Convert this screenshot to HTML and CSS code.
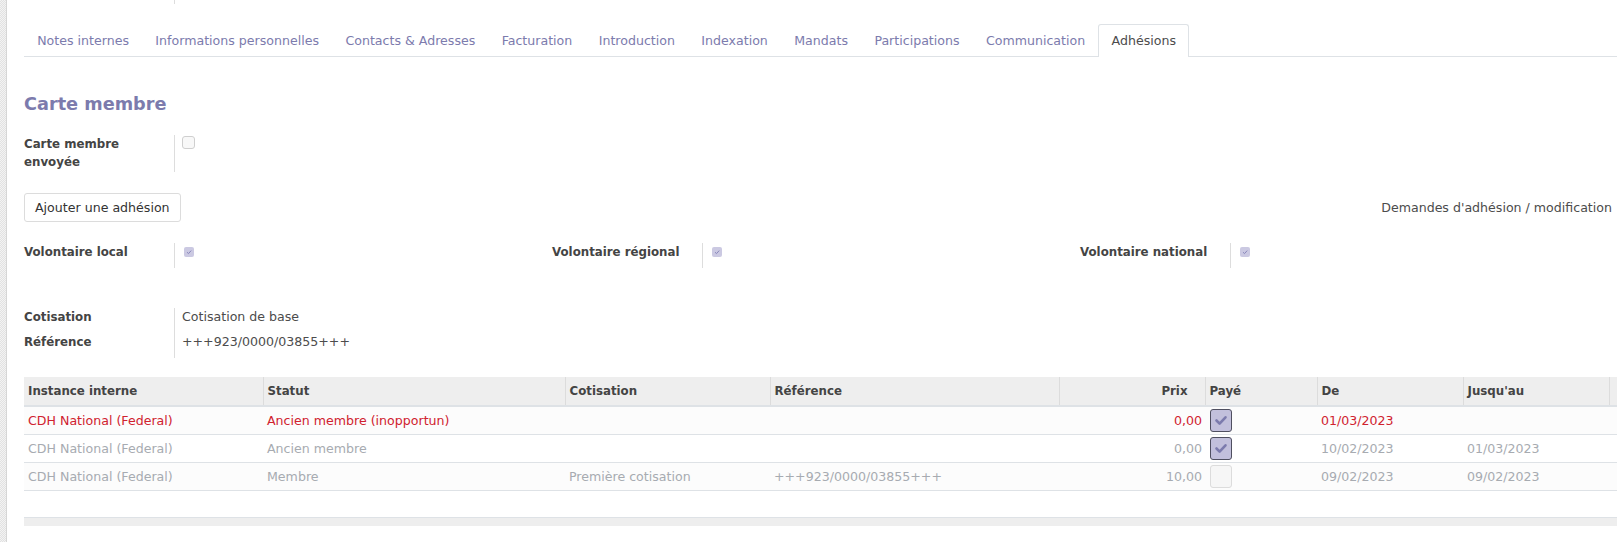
FILE: index.html
```html
<!DOCTYPE html>
<html lang="fr">
<head>
<meta charset="utf-8">
<title>Adhésions</title>
<link rel="stylesheet" href="styles.css">
</head>
<body>
<div class="app">
  <div class="strip"></div>
  <div class="main">
    <div class="top-frag"></div>
    <ul class="tabs">
      <li><a>Notes internes</a></li>
      <li><a>Informations personnelles</a></li>
      <li><a>Contacts &amp; Adresses</a></li>
      <li><a>Facturation</a></li>
      <li><a>Introduction</a></li>
      <li><a>Indexation</a></li>
      <li><a>Mandats</a></li>
      <li><a>Participations</a></li>
      <li><a>Communication</a></li>
      <li class="active"><a>Adhésions</a></li>
    </ul>
    <div class="sheet">
      <h2 class="title">Carte membre</h2>
      <div class="field field-card">
        <div class="label">Carte membre<br>envoyée</div>
        <div class="value"><span class="cb-md"></span></div>
      </div>
      <div class="actions">
        <button class="btn">Ajouter une adhésion</button>
        <span class="requests">Demandes d'adhésion / modification</span>
      </div>
      <div class="volunteers">
        <div class="field field-vol">
          <div class="label">Volontaire local</div>
          <div class="value"><span class="cb-sm"><svg viewBox="0 0 10 10" width="10" height="10"><polyline points="3,5.2 4.5,6.6 7.2,3.6" fill="none" stroke="#8a88bb" stroke-width="1"/></svg></span></div>
        </div>
        <div class="field field-vol">
          <div class="label">Volontaire régional</div>
          <div class="value"><span class="cb-sm"><svg viewBox="0 0 10 10" width="10" height="10"><polyline points="3,5.2 4.5,6.6 7.2,3.6" fill="none" stroke="#8a88bb" stroke-width="1"/></svg></span></div>
        </div>
        <div class="field field-vol">
          <div class="label">Volontaire national</div>
          <div class="value"><span class="cb-sm"><svg viewBox="0 0 10 10" width="10" height="10"><polyline points="3,5.2 4.5,6.6 7.2,3.6" fill="none" stroke="#8a88bb" stroke-width="1"/></svg></span></div>
        </div>
      </div>
      <div class="fields-cot">
        <div class="field field-line">
          <div class="label">Cotisation</div>
          <div class="value">Cotisation de base</div>
        </div>
        <div class="field field-line">
          <div class="label">Référence</div>
          <div class="value">+++923/0000/03855+++</div>
        </div>
      </div>
      <table class="list">
        <colgroup>
          <col style="width:239px"><col style="width:302px"><col style="width:205px"><col style="width:289px"><col style="width:146px"><col style="width:112px"><col style="width:146px"><col style="width:146px"><col style="width:30px">
        </colgroup>
        <thead>
          <tr>
            <th>Instance interne</th>
            <th>Statut</th>
            <th>Cotisation</th>
            <th>Référence</th>
            <th class="num">Prix</th>
            <th>Payé</th>
            <th>De</th>
            <th>Jusqu'au</th>
            <th></th>
          </tr>
        </thead>
        <tbody>
          <tr class="danger odd">
            <td>CDH National (Federal)</td>
            <td>Ancien membre (inopportun)</td>
            <td></td>
            <td></td>
            <td class="num">0,00</td>
            <td class="cbcell"><span class="cb-lg checked"><svg viewBox="0 0 22 23" width="22" height="23"><polyline points="6.5,11.5 9.6,14.6 15.5,8.3" fill="none" stroke="#7c7bad" stroke-width="2.6" stroke-linecap="round" stroke-linejoin="round"/></svg></span></td>
            <td>01/03/2023</td>
            <td></td>
            <td></td>
          </tr>
          <tr class="muted">
            <td>CDH National (Federal)</td>
            <td>Ancien membre</td>
            <td></td>
            <td></td>
            <td class="num">0,00</td>
            <td class="cbcell"><span class="cb-lg checked"><svg viewBox="0 0 22 23" width="22" height="23"><polyline points="6.5,11.5 9.6,14.6 15.5,8.3" fill="none" stroke="#7c7bad" stroke-width="2.6" stroke-linecap="round" stroke-linejoin="round"/></svg></span></td>
            <td>10/02/2023</td>
            <td>01/03/2023</td>
            <td></td>
          </tr>
          <tr class="muted odd">
            <td>CDH National (Federal)</td>
            <td>Membre</td>
            <td>Première cotisation</td>
            <td>+++923/0000/03855+++</td>
            <td class="num">10,00</td>
            <td class="cbcell"><span class="cb-lg"></span></td>
            <td>09/02/2023</td>
            <td>09/02/2023</td>
            <td></td>
          </tr>
          <tr class="empty"><td colspan="9"></td></tr>
        </tbody>
        <tfoot>
          <tr><td colspan="9"></td></tr>
        </tfoot>
      </table>
    </div>
  </div>
</div>
</body>
</html>
```

FILE: styles.css
```css
html, body {
  margin: 0;
  padding: 0;
  background: #ffffff;
  overflow: hidden;
}

body {
  font-family: "DejaVu Sans", "Liberation Sans", sans-serif;
  font-size: 12.6px;
  color: #4c4c4c;
}

.app {
  display: flex;
  width: 1617px;
  height: 542px;
  overflow: hidden;
}

.strip {
  flex: 0 0 6px;
  border-right: 1px solid #d6d6d6;
  background-color: #eeeeee;
  background-image: repeating-conic-gradient(#e2e2e2 0 25%, #f3f3f3 0 50%);
  background-size: 2px 2px;
}

.main {
  flex: 1 1 auto;
  min-width: 0;
  padding-left: 17px;
  overflow: hidden;
}

.top-frag {
  width: 151px;
  height: 4px;
  box-sizing: border-box;
  border-right: 1px solid #dddddd;
}

/* Tabs */
.tabs {
  display: flex;
  list-style: none;
  margin: 20px 0 0;
  padding: 0;
  border-bottom: 1px solid #dee2e6;
}

.tabs li {
  margin-bottom: -1px;
}

.tabs a {
  display: block;
  height: 31px;
  line-height: 31px;
  padding: 0 12.2px;
  border: 1px solid transparent;
  border-bottom: 0;
  color: #7c7bad;
  white-space: nowrap;
  border-radius: 3px 3px 0 0;
}

.tabs li.active a {
  color: #4c4c4c;
  background: #ffffff;
  border-color: #dee2e6;
  height: 32px;
}

/* Sheet */
.sheet {
  padding-right: 9px;
}

.title {
  margin: 35px 0 0;
  height: 24px;
  line-height: 24px;
  font-size: 17.7px;
  font-weight: bold;
  color: #7c7bad;
}

.field {
  display: grid;
  grid-template-columns: 151px 1fr;
}

.field .label {
  box-sizing: border-box;
  border-right: 1px solid #dddddd;
  font-weight: bold;
  font-size: 11.8px;
  color: #444444;
  line-height: 18px;
}

.field .value {
  padding-left: 7px;
  line-height: 18px;
}

.field-card {
  margin-top: 19px;
  height: 37px;
}

.field-card .label {
  height: 37px;
}

.cb-md {
  display: block;
  width: 11px;
  height: 11px;
  margin-top: 1px;
  border: 1px solid #cfcfcf;
  border-radius: 3px;
  background: #f8f8f8;
}

.actions {
  display: flex;
  justify-content: space-between;
  align-items: center;
  margin-top: 21px;
}

.btn {
  font-family: inherit;
  font-size: 12.6px;
  color: #333333;
  background: #ffffff;
  border: 1px solid #dcdcdc;
  border-radius: 3px;
  height: 29px;
  padding: 0 10px;
}

.requests {
  margin-right: -4px;
  color: #4c4c4c;
}

.volunteers {
  display: grid;
  grid-template-columns: repeat(3, 1fr);
  margin-top: 21px;
}

.field-vol {
  height: 25px;
}

.field-vol .value {
  padding-left: 9px;
}

.cb-sm {
  display: block;
  width: 10px;
  height: 10px;
  margin-top: 4px;
  border-radius: 2px;
  background: #cbc9e2;
}

.cb-sm svg {
  display: block;
}

.fields-cot {
  margin-top: 40px;
}

.field-line {
  height: 25px;
}

.field-line .label {
  height: 25px;
}

/* List table */
.list {
  margin-top: 19px;
  width: 1615px;
  table-layout: fixed;
  border-collapse: collapse;
}

.list th {
  height: 28px;
  padding: 0 4px;
  background: #eeeeee;
  border-left: 1px solid #dcdcdc;
  border-bottom: 2px solid #dee2e6;
  text-align: left;
  font-weight: bold;
  font-size: 11.8px;
  color: #444444;
  white-space: nowrap;
  overflow: hidden;
}

.list th:first-child {
  border-left: 0;
}

.list th.num {
  text-align: right;
  padding-right: 17px;
}

.list td {
  height: 27px;
  padding: 0 4px;
  border-bottom: 1px solid #dee2e6;
  white-space: nowrap;
  overflow: hidden;
}

.list td.num {
  text-align: right;
  padding-right: 3px;
}

.list td.cbcell {
  padding: 0 0 0 5px;
}

.list tr.odd td {
  background: #fcfcfc;
}

.list tr.danger td {
  color: #d0222f;
}

.list tr.muted td {
  color: #a7abb1;
}

.list tr.empty td {
  height: 26px;
  border-bottom: 1px solid #dee2e6;
  background: #ffffff;
}

.list tfoot td {
  height: 8px;
  padding: 0;
  background: #eeeeee;
  border: 0;
}

.cb-lg {
  display: block;
  box-sizing: border-box;
  width: 22px;
  height: 23px;
  border: 1px solid #dcdcdc;
  border-radius: 3px;
  background: #f6f6f6;
}

.cb-lg.checked {
  border-color: #4f4f60;
  background: #c2c0dc;
}

.cb-lg svg {
  display: block;
  margin: -1px 0 0 -1px;
}
```
